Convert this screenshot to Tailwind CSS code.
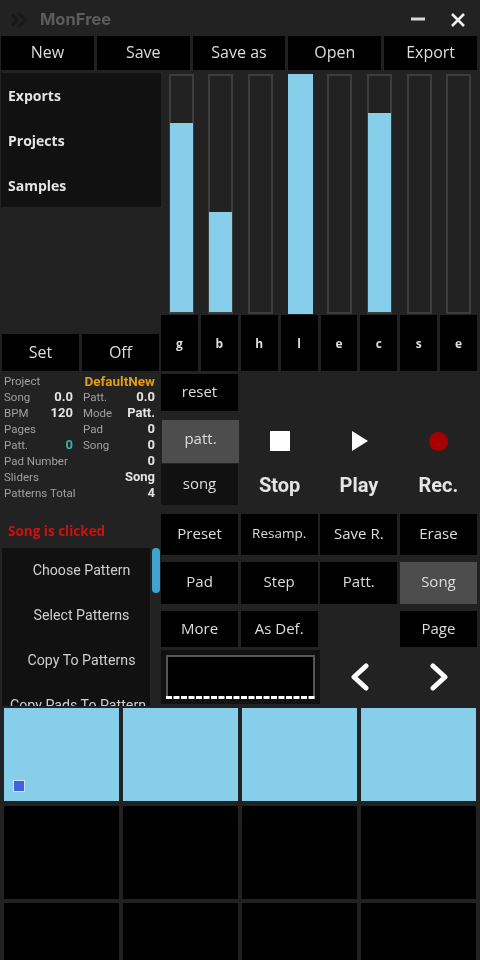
<!DOCTYPE html>
<html lang="en">
<head>
    <meta charset="UTF-8">
    <meta name="viewport" content="width=device-width, initial-scale=1.0">
    <title>MonFree</title>
    <script src="https://cdn.jsdelivr.net/npm/@tailwindcss/browser@4"></script>
</head>
<body class="bg-[#222222]">
<div class="w-[480px] h-[960px] overflow-hidden bg-[#222222] text-[#dddddd] font-['Open_Sans',sans-serif] text-[15.5px] blur-[0.4px]">

    <!-- title bar -->
    <div class="h-[36px] flex items-center pt-[3px] pl-[10px] pr-[15px]">
        <svg class="w-[18px] h-[18px]" viewBox="0 0 18 18" fill="none" stroke="#181818" stroke-width="2.6">
            <path d="M8 2l8 7-8 7M2 4l5 5-5 5"/>
        </svg>
        <span class="ml-[12px] font-['Inter',sans-serif] font-bold text-[16.5px] text-[#5c5c5c]">MonFree</span>
        <svg class="ml-auto w-[14px] h-[14px]" viewBox="0 0 14 14" stroke="#d8d8d8" stroke-width="3"><path d="M0 6h14"/></svg>
        <svg class="ml-[26px] w-[14px] h-[14px]" viewBox="0 0 14 14" stroke="#eeeeee" stroke-width="2.6"><path d="M1 1l12 12M13 1L1 13"/></svg>
    </div>

    <!-- file buttons -->
    <div class="flex gap-[3px] pl-[1px] w-[477px] h-[34px] text-[16px]">
        <button class="flex-1 bg-black pb-[3px]">New</button>
        <button class="flex-1 bg-black pb-[3px]">Save</button>
        <button class="flex-1 bg-black pb-[3px]">Save as</button>
        <button class="flex-1 bg-black pb-[3px]">Open</button>
        <button class="flex-1 bg-black pb-[3px]">Export</button>
    </div>

    <div class="flex mt-[3px] h-[635px]">
        <!-- left column -->
        <div class="w-[160px] ml-[1px] shrink-0 flex flex-col">
            <div class="h-[134px] flex flex-col font-bold text-[14px] text-[#e4e4e4]">
                <div class="h-[45px] bg-[#111111] flex items-center pl-[7px]">Exports</div>
                <div class="h-[45px] bg-[#111111] flex items-center pl-[7px]">Projects</div>
                <div class="h-[44px] bg-[#111111] flex items-center pl-[7px]">Samples</div>
            </div>
            <div class="flex gap-[3px] mt-[127px] ml-[1px] w-[157px] h-[37px] text-[16px]">
                <button class="flex-1 bg-black pb-[2px]">Set</button>
                <button class="flex-1 bg-black pb-[2px]">Off</button>
            </div>

            <!-- info table -->
            <div class="mt-[2px] pl-[3px] pr-[6px] h-[128px] font-['Roboto',sans-serif] text-[11.5px] leading-[16px] text-[#a0a0a0] grid grid-cols-[28px_41px_27px_1fr] content-start">
                <span class="col-span-2">Project</span><span class="col-span-2 text-right font-bold text-[13.5px] text-[#e39c14]">DefaultNew</span>
                <span>Song</span><span class="text-right font-bold text-[13px] text-[#e4e4e4]">0.0</span><span class="pl-[10px] whitespace-nowrap">Patt.</span><span class="text-right font-bold text-[13px] text-[#e4e4e4]">0.0</span>
                <span>BPM</span><span class="text-right font-bold text-[13px] text-[#e4e4e4]">120</span><span class="pl-[10px] whitespace-nowrap">Mode</span><span class="text-right font-bold text-[13px] text-[#e4e4e4]">Patt.</span>
                <span>Pages</span><span></span><span class="pl-[10px]">Pad</span><span class="text-right font-bold text-[13px] text-[#e4e4e4]">0</span>
                <span>Patt.</span><span class="text-right font-bold text-[13px] text-[#34b3a8]">0</span><span class="pl-[10px]">Song</span><span class="text-right font-bold text-[13px] text-[#e4e4e4]">0</span>
                <span class="col-span-3">Pad Number</span><span class="text-right font-bold text-[13px] text-[#e4e4e4]">0</span>
                <span class="col-span-3">Sliders</span><span class="text-right font-bold text-[13px] text-[#e4e4e4]">Song</span>
                <span class="col-span-3">Patterns Total</span><span class="text-right font-bold text-[13px] text-[#e4e4e4]">4</span>
            </div>

            <div class="h-[47px] flex items-center pl-[7px] pt-[14px] font-bold text-[13.5px] text-[#d01010]">Song is clicked</div>

            <!-- pattern list -->
            <div class="flex h-[158px] gap-[2px] ml-[1px]">
                <div class="w-[148px] overflow-hidden flex flex-col text-[14.2px] text-[#cfcfcf] font-['Roboto',sans-serif]">
                    <div class="h-[45px] shrink-0 bg-[#111111] flex items-center justify-center pl-[11px]">Choose Pattern</div>
                    <div class="h-[45px] shrink-0 bg-[#111111] flex items-center justify-center pl-[11px]">Select Patterns</div>
                    <div class="h-[45px] shrink-0 bg-[#111111] flex items-center justify-center pl-[11px]">Copy To Patterns</div>
                    <div class="h-[45px] shrink-0 bg-[#111111] flex items-center pl-[8px] whitespace-nowrap">Copy Pads To Pattern</div>
                </div>
                <div class="w-[8px] h-[45px] rounded-full bg-[#3fa5d0]"></div>
            </div>
        </div>

        <!-- right column -->
        <div class="flex-1 flex flex-col">
            <!-- sliders -->
            <div class="h-[240px] pl-[7.5px] flex gap-[14.7px] mt-[1px]">
                <div class="w-[25px] border-2 border-[#3d3d3d] flex flex-col justify-end"><div class="h-[189px] -mx-[1px] bg-[#87ceeb]"></div></div>
                <div class="w-[25px] border-2 border-[#3d3d3d] flex flex-col justify-end"><div class="h-[100px] -mx-[1px] bg-[#87ceeb]"></div></div>
                <div class="w-[25px] border-2 border-[#3d3d3d]"></div>
                <div class="w-[25px] bg-[#87ceeb]"></div>
                <div class="w-[25px] border-2 border-[#3d3d3d]"></div>
                <div class="w-[25px] border-2 border-[#3d3d3d] flex flex-col justify-end"><div class="h-[199px] -mx-[1px] bg-[#87ceeb]"></div></div>
                <div class="w-[25px] border-2 border-[#3d3d3d]"></div>
                <div class="w-[25px] border-2 border-[#3d3d3d]"></div>
            </div>
            <!-- letter buttons -->
            <div class="flex gap-[3px] w-[316px] h-[56px] mt-[1px] font-bold text-[12px]">
                <button class="flex-1 bg-black pt-[2px]">g</button>
                <button class="flex-1 bg-black pt-[2px]">b</button>
                <button class="flex-1 bg-black pt-[2px]">h</button>
                <button class="flex-1 bg-black pt-[2px]">l</button>
                <button class="flex-1 bg-black pt-[2px]">e</button>
                <button class="flex-1 bg-black pt-[2px]">c</button>
                <button class="flex-1 bg-black pt-[2px]">s</button>
                <button class="flex-1 bg-black pt-[2px]">e</button>
            </div>
            <!-- mode + transport -->
            <div class="flex mt-[3px] h-[131px]">
                <div class="w-[78px] flex flex-col text-[15px]">
                    <button class="h-[37px] w-[77px] bg-black pb-[2px]">reset</button>
                    <button class="h-[43px] mt-[9px] ml-[1px] bg-[#4d4d4d] pb-[6px]">patt.</button>
                    <button class="h-[41px] mt-[1px] w-[77px] bg-[#111111] pb-[2px]">song</button>
                </div>
                <div class="flex-1 grid grid-cols-3 pt-[55px] pl-[1px] pr-[2px] font-['Roboto',sans-serif] font-bold text-[20px] text-center text-[#e4e4e4]">
                    <div class="flex flex-col items-center">
                        <div class="h-[24px] flex items-center"><div class="w-[20px] h-[20px] bg-white"></div></div>
                        <div class="mt-[18px] leading-[28px]">Stop</div>
                    </div>
                    <div class="flex flex-col items-center">
                        <div class="h-[24px] flex items-center ml-[2px]"><svg class="w-[16px] h-[20px]" viewBox="0 0 16 20" fill="#ffffff"><path d="M0 0l16 10L0 20z"/></svg></div>
                        <div class="mt-[18px] leading-[28px]">Play</div>
                    </div>
                    <div class="flex flex-col items-center">
                        <div class="h-[24px] flex items-center"><div class="w-[19px] h-[19px] rounded-full bg-[#a80000]"></div></div>
                        <div class="mt-[18px] leading-[28px]">Rec.</div>
                    </div>
                </div>
            </div>
            <!-- action buttons -->
            <div class="mt-[9px] w-[316px] grid grid-cols-4 gap-x-[2.5px] grid-rows-[41px_42px_36px] gap-y-[7px] text-[15px]">
                <button class="bg-black pb-[3px]">Preset</button>
                <button class="bg-black pb-[3px] text-[13.5px]">Resamp.</button>
                <button class="bg-black pb-[3px]">Save R.</button>
                <button class="bg-black pb-[3px]">Erase</button>
                <button class="bg-black pb-[3px]">Pad</button>
                <button class="bg-black pb-[3px]">Step</button>
                <button class="bg-black pb-[3px]">Patt.</button>
                <button class="bg-[#4d4d4d] pb-[3px]">Song</button>
                <button class="bg-black pb-[2px]">More</button>
                <button class="bg-black pb-[2px]">As Def.</button>
                <div></div>
                <button class="bg-black pb-[2px]">Page</button>
            </div>
            <!-- waveform + arrows -->
            <div class="flex items-center mt-[3px]">
                <div class="w-[159px] h-[54px] bg-[#111111] pl-[5px] pt-[5px]">
                    <div class="w-[149px] h-[44px] bg-black border-2 border-[#555555] border-b-0 flex items-end">
                        <svg class="block -mx-[2px] w-[149px] h-[3px] shrink-0" viewBox="0 0 149 3"><path d="M0 1.5h149" stroke="#ffffff" stroke-width="3" stroke-dasharray="6 1.5"/></svg>
                    </div>
                </div>
                <svg class="ml-[30px] w-[20px] h-[28px]" viewBox="0 0 20 28" fill="none" stroke="#ffffff" stroke-width="5" stroke-linecap="round" stroke-linejoin="round"><path d="M16 3L4 14l12 11"/></svg>
                <svg class="ml-[59px] w-[20px] h-[28px]" viewBox="0 0 20 28" fill="none" stroke="#ffffff" stroke-width="5" stroke-linecap="round" stroke-linejoin="round"><path d="M4 3l12 11L4 25"/></svg>
            </div>
        </div>
    </div>

    <!-- pads -->
    <div class="grid grid-cols-4 gap-[4.5px] pl-[4px] w-[476px] auto-rows-[93px]">
        <div class="bg-[#87ceeb] relative"><div class="absolute left-[9px] bottom-[9px] w-[12px] h-[12px] bg-[#3e63dd] border border-[#c6e4f2]"></div></div>
        <div class="bg-[#87ceeb]"></div>
        <div class="bg-[#87ceeb]"></div>
        <div class="bg-[#87ceeb]"></div>
        <div class="bg-black"></div>
        <div class="bg-black"></div>
        <div class="bg-black"></div>
        <div class="bg-black"></div>
        <div class="bg-black"></div>
        <div class="bg-black"></div>
        <div class="bg-black"></div>
        <div class="bg-black"></div>
    </div>
</div>
</body>
</html>
